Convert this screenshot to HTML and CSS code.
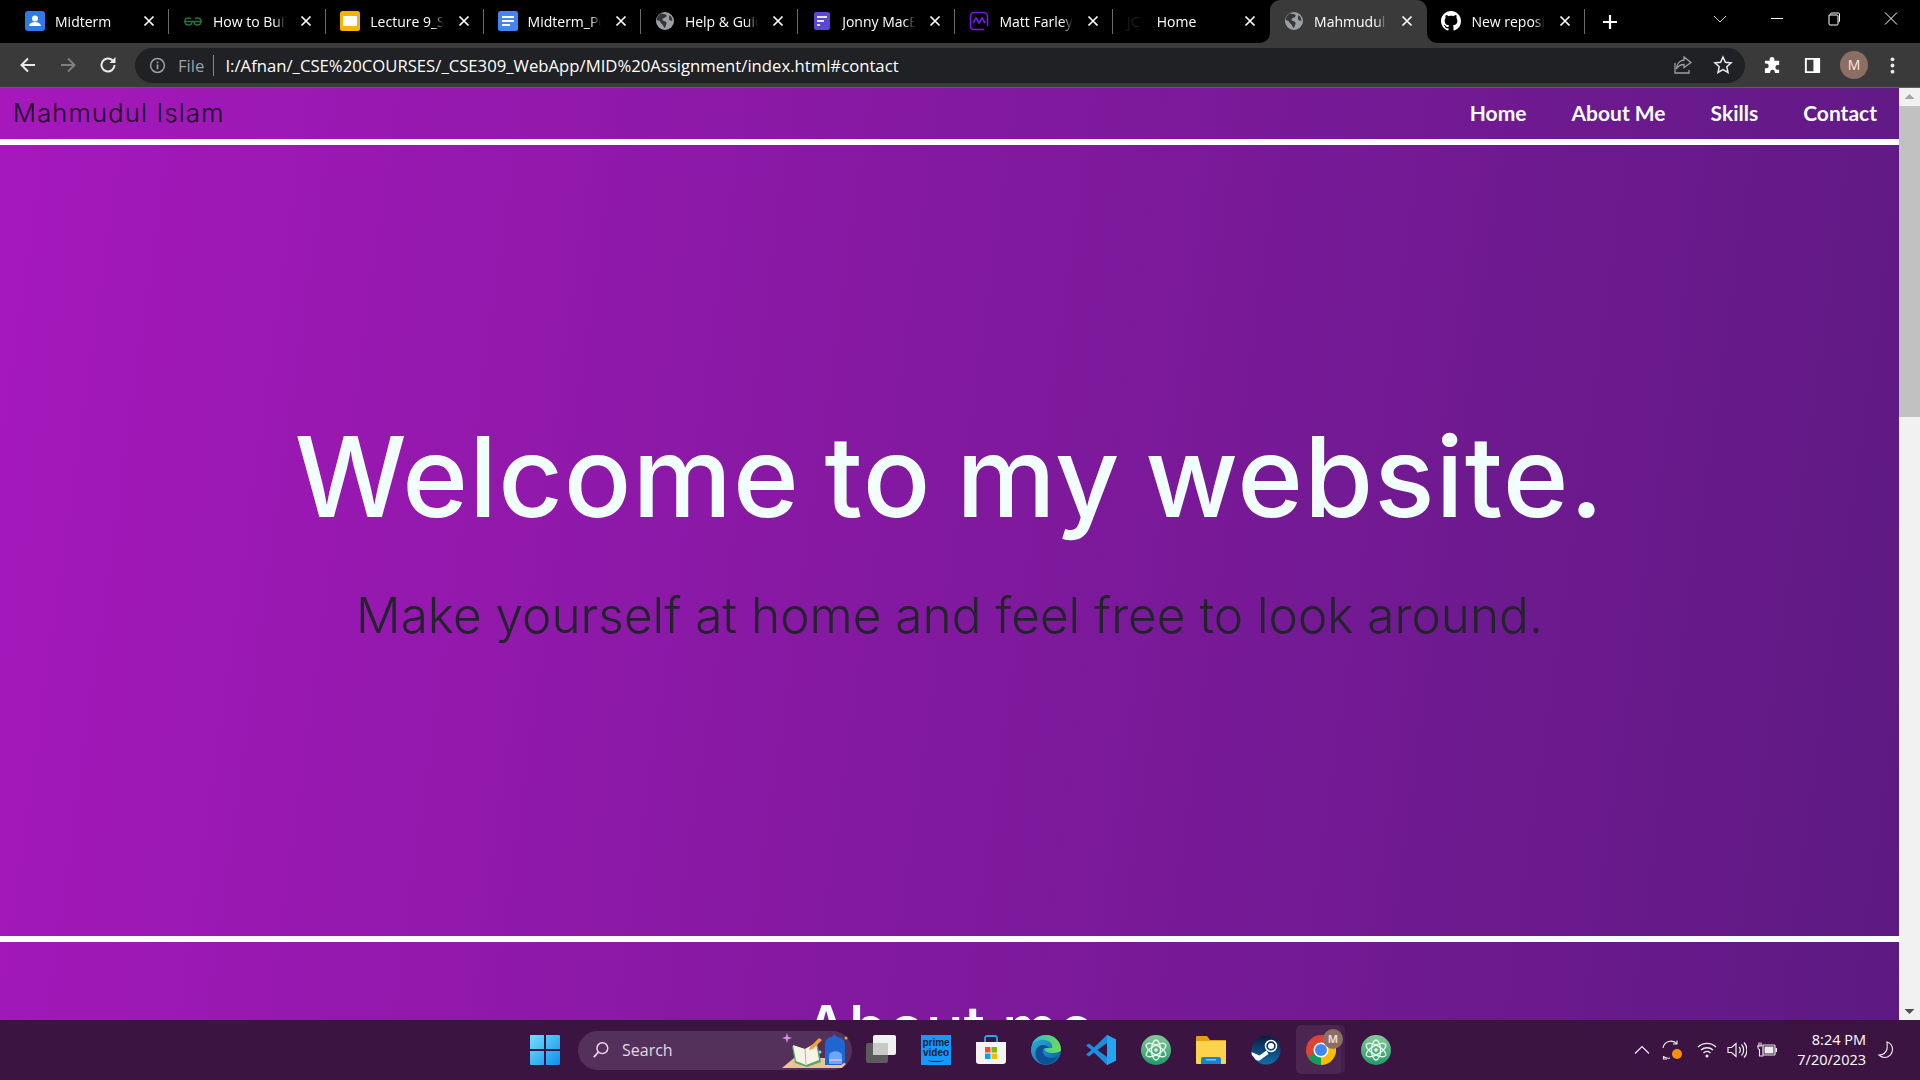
FILE: index.html
```html
<!DOCTYPE html>
<html lang="en">
<head>
  <meta charset="UTF-8" />
  <title>Mahmudul Islam</title>
  <link rel="stylesheet" href="styles.css">
</head>
<body>

  <svg class="sprite" xmlns="http://www.w3.org/2000/svg">
    <defs>
      <symbol id="i-close" viewBox="0 0 12 12"><path d="M1.5 1.5l9 9M10.5 1.5l-9 9" stroke="#fff" stroke-width="1.7" fill="none"/></symbol>
      <symbol id="i-globe" viewBox="0 0 20 20">
        <circle cx="10" cy="10" r="9" fill="#9aa0a6"/>
        <path d="M6 2.5c2 .5 4 .3 5.500 1.500 1 1-1 2.500-2.500 3-1.500.5-2 1.500-1 2.500s3 .5 3.500 2c.3 1.500-.8 3-1.500 5.500-1.500-.5-1.700-2.500-2.500-3.500-1-1-2-1.500-2.500-3-.5-1.500-3-1-3.300-1.800C2 6 4 3.500 6 2.500z" fill="#35363a"/>
        <path d="M14.500 4c1.500 1.200 2.800 3.300 3 5.500-1.500.5-3 0-3.500-1.500-.4-1.300.5-2.500.5-4z" fill="#35363a"/>
      </symbol>
      <symbol id="i-atom" viewBox="0 0 30 30">
        <circle cx="15" cy="15" r="15" fill="url(#atom-bg)"/>
        <g fill="none" stroke="#e8f6ec" stroke-width="1.300">
          <ellipse cx="15" cy="15" rx="11" ry="4.500" transform="rotate(30 15 15)"/>
          <ellipse cx="15" cy="15" rx="11" ry="4.500" transform="rotate(-30 15 15)"/>
          <ellipse cx="15" cy="15" rx="4.500" ry="10"/>
        </g>
        <circle cx="15" cy="15" r="1.800" fill="#e8f6ec"/>
      </symbol>
      <linearGradient id="atom-bg" x1="0" y1="0" x2="0" y2="1"><stop offset="0" stop-color="#86c99a"/><stop offset="1" stop-color="#1f9a66"/></linearGradient>
      <linearGradient id="win-bg" x1="0" y1="0" x2="1" y2="1"><stop offset="0" stop-color="#6fe2fb"/><stop offset="1" stop-color="#0f8fee"/></linearGradient>
      <linearGradient id="edge-bg" x1="0" y1="0" x2="1" y2="1"><stop offset="0" stop-color="#2bb5d8"/><stop offset="1" stop-color="#0c59a4"/></linearGradient>
      <linearGradient id="edge-top" x1="0" y1="0" x2="1" y2="0"><stop offset="0" stop-color="#2fb4e0"/><stop offset="1" stop-color="#6ee04e"/></linearGradient>
      <linearGradient id="steam-bg" x1="0" y1="0" x2="0" y2="1"><stop offset="0" stop-color="#0d1b3d"/><stop offset="1" stop-color="#0f6fa8"/></linearGradient>
    </defs>
  </svg>

  <div class="window">

    <div class="tabstrip">
      <div class="tab">
        <svg class="favicon" viewBox="0 0 20 20"><rect width="20" height="20" rx="3" fill="#2f7be6"/><circle cx="10" cy="7.500" r="3" fill="#fff"/><path d="M4 15c.5-3 3-4 6-4s5.500 1 6 4z" fill="#fff"/></svg>
        <span class="tab-title">Midterm</span>
        <svg class="tab-close"><use href="#i-close"/></svg>
      </div>
      <div class="tab">
        <svg class="favicon" viewBox="0 0 20 20"><path d="M1 10.500h18M9 10.500c0 2.500-1.500 3.500-3.500 3.500S2 12.500 2 10.500 3.500 7 5.500 7c1 0 2 .5 2.500 1M11 10.500c0 2.500 1.500 3.500 3.500 3.500s3.500-1.500 3.500-3.500S16.500 7 14.500 7c-1 0-2 .5-2.500 1" stroke="#26703a" stroke-width="1.400" fill="none"/></svg>
        <span class="tab-title">How to Build a Website</span>
        <svg class="tab-close"><use href="#i-close"/></svg>
      </div>
      <div class="tab">
        <svg class="favicon" viewBox="0 0 20 20"><rect width="20" height="20" rx="2.500" fill="#f4b400"/><rect x="3" y="5" width="14" height="10" fill="#fff"/></svg>
        <span class="tab-title">Lecture 9_Slides</span>
        <svg class="tab-close"><use href="#i-close"/></svg>
      </div>
      <div class="tab">
        <svg class="favicon" viewBox="0 0 20 20"><rect width="20" height="20" rx="2.500" fill="#4285f4"/><path d="M4 5h12v2H4zM4 9h12v2H4zM4 13h8v2H4z" fill="#fff"/></svg>
        <span class="tab-title">Midterm_Portfolio</span>
        <svg class="tab-close"><use href="#i-close"/></svg>
      </div>
      <div class="tab">
        <svg class="favicon"><use href="#i-globe"/></svg>
        <span class="tab-title">Help &amp; Guide</span>
        <svg class="tab-close"><use href="#i-close"/></svg>
      </div>
      <div class="tab">
        <svg class="favicon" viewBox="0 0 20 20"><rect x="2" y="1" width="16" height="18" rx="2" fill="#5b46d6"/><path d="M5 5h10v2H5zM5 9h7v2H5z" fill="#e7e3fb"/><rect x="5" y="13" width="3" height="2" fill="#e7e3fb"/></svg>
        <span class="tab-title">Jonny MacBeth</span>
        <svg class="tab-close"><use href="#i-close"/></svg>
      </div>
      <div class="tab">
        <svg class="favicon" viewBox="0 0 20 20"><path d="M15 18.500H5a3.500 3.500 0 0 1-3.500-3.500V5A3.500 3.500 0 0 1 5 1.500h10A3.500 3.500 0 0 1 18.500 5v10" fill="none" stroke="#7a16f0" stroke-width="1.600"/><path d="M4 12l3-5 3 5 3-5 3 5" fill="none" stroke="#7a16f0" stroke-width="1.600"/></svg>
        <span class="tab-title">Matt Farley</span>
        <svg class="tab-close"><use href="#i-close"/></svg>
      </div>
      <div class="tab before-active">
        <span class="favicon favicon-dark">jC</span>
        <span class="tab-title">Home</span>
        <svg class="tab-close"><use href="#i-close"/></svg>
      </div>
      <div class="tab tab-active">
        <svg class="favicon"><use href="#i-globe"/></svg>
        <span class="tab-title">Mahmudul Islam</span>
        <svg class="tab-close"><use href="#i-close"/></svg>
      </div>
      <div class="tab after-active">
        <svg class="favicon" viewBox="0 0 16 16"><path fill="#fff" d="M8 0C3.580 0 0 3.580 0 8c0 3.540 2.290 6.530 5.470 7.590.4.070.55-.17.55-.38 0-.19-.01-.82-.01-1.490-2.010.37-2.530-.49-2.690-.94-.09-.23-.48-.94-.82-1.130-.28-.15-.68-.52-.01-.53.63-.01 1.080.58 1.230.82.720 1.210 1.870.87 2.330.66.070-.52.280-.87.510-1.070-1.780-.2-3.640-.89-3.640-3.950 0-.87.310-1.590.820-2.150-.08-.2-.36-1.020.08-2.120 0 0 .67-.21 2.200.82.640-.18 1.320-.27 2-.27s1.360.09 2 .27c1.530-1.040 2.200-.82 2.200-.82.440 1.100.16 1.920.08 2.120.51.560.82 1.270.82 2.150 0 3.070-1.870 3.750-3.650 3.950.290.250.540.730.540 1.480 0 1.070-.01 1.930-.01 2.200 0 .210.150.460.550.380A8.010 8.010 0 0 0 16 8c0-4.420-3.580-8-8-8z"/></svg>
        <span class="tab-title">New repository</span>
        <svg class="tab-close"><use href="#i-close"/></svg>
      </div>
      <div class="strip-rest">
        <svg class="new-tab" viewBox="0 0 16 16"><path d="M8 1v14M1 8h14" stroke="#fff" stroke-width="2.200"/></svg>
        <div class="win-controls">
          <svg viewBox="0 0 14 14"><path d="M1 4l6 6 6-6" stroke="#c8c8c8" fill="none"/></svg>
          <svg viewBox="0 0 14 14"><path d="M1 6.500h12" stroke="#fff" fill="none"/></svg>
          <svg viewBox="0 0 14 14"><path d="M3.500 2.500V2a1 1 0 0 1 1-1h7a1 1 0 0 1 1 1v7a1 1 0 0 1-1 1M2 3h8a1 1 0 0 1 1 1v8a1 1 0 0 1-1 1H3a1 1 0 0 1-1-1z" stroke="#fff" fill="none"/></svg>
          <svg viewBox="0 0 14 14"><path d="M1 .5l12 12M13 .5l-12 12" stroke="#fff" fill="none"/></svg>
        </div>
      </div>
    </div>

    <div class="toolbar">
      <svg class="tool-icon" viewBox="0 0 20 20"><path d="M17 10H4M10 3.500L3.500 10l6.500 6.500" stroke="#e8eaed" stroke-width="2" fill="none"/></svg>
      <svg class="tool-icon" viewBox="0 0 20 20"><path d="M3 10h13M10 3.500l6.500 6.500-6.500 6.500" stroke="#7c7f82" stroke-width="2" fill="none"/></svg>
      <svg class="tool-icon" viewBox="0 0 20 20"><path d="M16.500 10a6.500 6.500 0 1 1-2-4.700" stroke="#e8eaed" stroke-width="2" fill="none"/><path d="M17.500 2v6h-6z" fill="#e8eaed"/></svg>
      <div class="omnibox">
        <svg class="info-icon" viewBox="0 0 16 16"><circle cx="8" cy="8" r="6.500" stroke="#9aa0a6" stroke-width="1.400" fill="none"/><path d="M7.200 7h1.600v4.500H7.200zM7.200 4.300h1.600v1.600H7.200z" fill="#9aa0a6"/></svg>
        <span class="url-scheme">File</span>
        <span class="url-sep"></span>
        <span class="url">I:/Afnan/_CSE%20COURSES/_CSE309_WebApp/MID%20Assignment/index.html#contact</span>
        <svg class="omni-icon" viewBox="0 0 20 20"><path d="M11 2l7 5.500-7 5v-3c-4 0-6 1.500-7.500 4.500 0-5 3-8.500 7.500-9zM2 8v10h14v-3" stroke="#9aa0a6" stroke-width="1.300" fill="none"/></svg>
        <svg class="omni-icon" viewBox="0 0 20 20"><path d="M10 2l2.400 5.300 5.700.6-4.300 3.800 1.200 5.700L10 14.500l-5 2.900 1.200-5.700L1.900 7.900l5.700-.6z" stroke="#e8eaed" stroke-width="1.500" fill="none"/></svg>
      </div>
      <svg class="ext-icon ext-puzzle" viewBox="0 0 20 20"><path d="M7 3.500a2.500 2.500 0 0 1 5 0V5h5v4.500h-1.500a2.500 2.500 0 0 0 0 5H17V18h-4.500v-1a2.500 2.500 0 0 0-5 0v1H2v-5h1.500a2.500 2.500 0 0 0 0-5H2V5h5z" fill="#fff"/></svg>
      <svg class="ext-icon" viewBox="0 0 20 20"><path d="M2 2h16v16H2z M4 4v12h7V4z" fill="#fff" fill-rule="evenodd"/></svg>
      <span class="avatar">M</span>
      <svg class="ext-icon ext-menu" viewBox="0 0 20 20"><circle cx="10" cy="3.500" r="2" fill="#e8eaed"/><circle cx="10" cy="10" r="2" fill="#e8eaed"/><circle cx="10" cy="16.500" r="2" fill="#e8eaed"/></svg>
    </div>

    <div class="viewport">
      <div class="page">
        <nav class="navbar">
          <a class="brand" href="#">Mahmudul Islam</a>
          <ul class="nav-links">
            <li><a href="#home">Home</a></li>
            <li><a href="#about">About Me</a></li>
            <li><a href="#skills">Skills</a></li>
            <li><a href="#contact">Contact</a></li>
          </ul>
        </nav>
        <section class="hero" id="home">
          <h1>Welcome to my website.</h1>
          <p>Make yourself at home and feel free to look around.</p>
        </section>
        <section class="about" id="about">
          <h2>About me</h2>
        </section>
      </div>
      <div class="scrollbar">
        <svg class="scroll-arrow" viewBox="0 0 20 18"><path d="M5 11l5-5 5 5z" fill="#a3a3a3"/></svg>
        <div class="scroll-track"><div class="scroll-thumb"></div></div>
        <svg class="scroll-arrow" viewBox="0 0 20 18"><path d="M5 7l5 5 5-5z" fill="#505050"/></svg>
      </div>
    </div>

    <footer class="taskbar">
      <div class="task-center">
        <svg class="task-icon" viewBox="0 0 30 30"><path d="M0 1a1 1 0 0 1 1-1h13v14H0zM16 0h13a1 1 0 0 1 1 1v13H16zM0 16h14v14H1a1 1 0 0 1-1-1zM16 16h14v13a1 1 0 0 1-1 1H16z" fill="url(#win-bg)"/></svg>
        <div class="search">
          <svg class="search-icon" viewBox="0 0 20 20"><circle cx="11.500" cy="8" r="6" stroke="#e6dbe8" stroke-width="1.600" fill="none"/><path d="M7 12.500L2 18" stroke="#e6dbe8" stroke-width="2"/></svg>
          <span>Search</span>
          <svg class="search-art" viewBox="0 0 66 38">
            <path d="M0 37L12 27h44l8 6-4 4z" fill="#e7c594"/>
            <path d="M10 15l13 3 12-7 4 20-14 5-12-4z" fill="#5aa469"/>
            <path d="M11 14l12 4 11-6 3 17-13 5-10-4z" fill="#f5f3e6"/>
            <path d="M23 18l1 15" stroke="#a8a28c" stroke-width=".8"/>
            <path d="M28 16l9-9 3 2-9 9-4 1z" fill="#f2a23c"/>
            <path d="M43 34V14c0-5 3-8 7-8l2-3 3 3c5 0 8 3 8 8v15c0 3-3 5-5 5z" fill="#1f66d1"/>
            <path d="M47 33V24a7 6 0 0 1 13 0v9z" fill="#6aa7f5"/>
            <path d="M47 29h13" stroke="#c4b5fd" stroke-width="2"/>
            <path d="M5 2l1.200 3.800L10 7 6.200 8.200 5 12 3.800 8.200 0 7l3.800-1.200z" fill="#d98bf0"/>
            <circle cx="38" cy="21" r="1.500" fill="#7fd8e8"/>
            <circle cx="64" cy="7" r="1.500" fill="#f2a23c"/>
          </svg>
        </div>
        <svg class="task-icon" viewBox="0 0 30 30"><rect y="8" width="22" height="20" rx="2" fill="#5b5b5b"/><rect x="7" width="23" height="20" rx="2" fill="#f1f1f1"/><rect x="7" y="8" width="15" height="12" fill="#c9c9c9"/></svg>
        <div class="task-icon prime"><span>prime</span><span>video</span></div>
        <svg class="task-icon" viewBox="0 0 30 30"><path d="M9 7V3a2 2 0 0 1 2-2h8a2 2 0 0 1 2 2v4" stroke="#2aa3e8" stroke-width="1.800" fill="none"/><path d="M0 7h30v19a3 3 0 0 1-3 3H3a3 3 0 0 1-3-3z" fill="#f4f4f4"/><rect x="9" y="12" width="5.500" height="5.500" fill="#f25022"/><rect x="15.500" y="12" width="5.500" height="5.500" fill="#7fba00"/><rect x="9" y="18.500" width="5.500" height="5.500" fill="#00a4ef"/><rect x="15.500" y="18.500" width="5.500" height="5.500" fill="#ffb900"/></svg>
        <div class="task-slot running">
          <svg class="task-icon" viewBox="0 0 30 30"><circle cx="15" cy="15" r="15" fill="url(#edge-bg)"/><path d="M30 15C30 6 23 0 15 0 8 0 3 4 1 9c3-3 8-5 13-4 5 .7 8 4 7 8h-8c0 3 4 5 8 5 4 0 9-1 9-3z" fill="url(#edge-top)"/><path d="M12 14c-1 5 3 9 8 9 3 0 5-1 7-2-3 6-9 9-15 8 -6-2-9-9-7-14 1-3 4-5 7-5 3 0 5 1 6 3-3 0-5 .5-6 1z" fill="#0f4f96"/></svg>
        </div>
        <div class="task-slot running">
          <svg class="task-icon" viewBox="0 0 30 30"><path d="M21 0l9 4.500v21L21 30 8 17.500 3 21.500 0 19.500 5.500 15 0 10.500 3 8.500l5 4z" fill="#1a8fe0"/><path d="M21 8v14l-9.500-7z" fill="#3a1444"/><path d="M21 0l9 4.500v21L21 30z" fill="#23a6f0"/></svg>
        </div>
        <svg class="task-icon"><use href="#i-atom"/></svg>
        <div class="task-slot running">
          <svg class="task-icon" viewBox="0 0 30 30"><path d="M0 2a1 1 0 0 1 1-1h10l3 4h16v8H0z" fill="#e3a008"/><path d="M0 6h30v22a1 1 0 0 1-1 1H1a1 1 0 0 1-1-1z" fill="#fcd34d"/><path d="M5 24a2 2 0 0 1 2-2h16a2 2 0 0 1 2 2v5H5z" fill="#1b7fd6"/><rect x="10" y="24" width="10" height="1.500" fill="#7cc1f5"/></svg>
        </div>
        <svg class="task-icon" viewBox="0 0 30 30"><circle cx="15" cy="15" r="14.500" fill="url(#steam-bg)"/><circle cx="20" cy="11" r="5.500" fill="none" stroke="#fff" stroke-width="1.500"/><circle cx="20" cy="11" r="3" fill="#fff"/><path d="M.5 17l8 3.500 7-5 2 3.500-7 5a4 4 0 0 1-7-1L.8 20z" fill="#fff"/></svg>
        <div class="task-slot active">
          <svg class="task-icon" viewBox="0 0 30 30"><circle cx="15" cy="15" r="15" fill="#db4437"/><path d="M15 15L2 22.500A15 15 0 0 0 15 30z" fill="#0f9d58"/><path d="M15 15l13-7.500A15 15 0 0 1 15 30z" fill="#fbbc04"/><circle cx="15" cy="15" r="7.500" fill="#fff"/><circle cx="15" cy="15" r="6" fill="#4285f4"/></svg>
          <span class="chrome-badge">M</span>
        </div>
        <div class="task-slot running">
          <svg class="task-icon"><use href="#i-atom"/></svg>
        </div>
      </div>
      <div class="tray">
        <svg class="tray-chevron" viewBox="0 0 16 10"><path d="M1 8.500l7-7 7 7" stroke="#eee" stroke-width="1.200" fill="none"/></svg>
        <svg class="tray-sync" viewBox="0 0 20 20"><path d="M1 8a8 8 0 0 1 14-4M15 .5V4h-4M5 19H1.500v-3" stroke="#eee" stroke-width="1.100" fill="none"/><path d="M1.500 16.500A8 8 0 0 0 8 18" stroke="#eee" stroke-width="1.100" fill="none"/><circle cx="15" cy="14" r="5" fill="#f79009"/></svg>
        <svg class="tray-icon tray-wifi" viewBox="0 0 20 20"><path d="M1 7a13 13 0 0 1 18 0M4 10a9 9 0 0 1 12 0M6.500 13a5 5 0 0 1 7 0" stroke="#eee" stroke-width="1.400" fill="none"/><circle cx="10" cy="16" r="1.500" fill="#eee"/></svg>
        <svg class="tray-icon" viewBox="0 0 20 20"><path d="M1 7.500h3.500L9 3.500v13l-4.500-4H1z" stroke="#eee" stroke-width="1.200" fill="none"/><path d="M12 7a4 4 0 0 1 0 6M14.500 4.500a8 8 0 0 1 0 11M17 2.500a11 11 0 0 1 0 15" stroke="#eee" stroke-width="1.200" fill="none"/></svg>
        <svg class="tray-icon" viewBox="0 0 20 20"><path d="M6 5h11a1 1 0 0 1 1 1v8a1 1 0 0 1-1 1H6z" stroke="#eee" stroke-width="1.200" fill="none"/><rect x="7.500" y="6.500" width="9" height="7" fill="#eee"/><rect x="18.500" y="8" width="1.500" height="4" fill="#eee"/><path d="M0 6h5M2 2.500V6M4 2.500V6M1 6v2a2 2 0 0 0 1.500 1.500V16h4" stroke="#eee" stroke-width="1.100" fill="none"/></svg>
        <div class="clock"><span>8:24 PM</span><span>7/20/2023</span></div>
        <svg class="tray-moon" viewBox="0 0 16 18"><path d="M9 1c3 1 5.500 4 5.500 7.500A8 8 0 0 1 6.500 16.500c-2 0-4-1-5.500-2.500 4 0 7-2.500 8-6 .5-2.500 0-5 0-7z" stroke="#eee" stroke-width="1.100" fill="none"/></svg>
      </div>
    </footer>

  </div>

</body>
</html>
```

FILE: styles.css
```css
/* Base */
* {
  box-sizing: border-box;
}
body {
  margin: 0;
  font-family: "Open Sans", "Noto Sans", sans-serif;
  background: #000;
  overflow: hidden;
}
a {
  text-decoration: none;
  color: inherit;
}
.sprite {
  display: block;
  width: 0;
  height: 0;
}
.window {
  width: 1920px;
  height: 1080px;
  display: flex;
  flex-direction: column;
  overflow: hidden;
}

/* Tab strip */
.tabstrip {
  height: 43px;
  flex: none;
  display: flex;
  background: linear-gradient(#000 50%, #3a3a3a 50%);
}
.tab {
  width: 157.3px;
  height: 43px;
  flex: none;
  display: flex;
  align-items: center;
  padding: 0 14px 1px 14px;
  background: #000 linear-gradient(#6a6a6a, #6a6a6a) no-repeat right 9px / 1px 25px;
  color: #fff;
  font-size: 14px;
}
.tab:first-child {
  width: 169px;
  padding-left: 25px;
}
.before-active {
  background: #000;
  border-bottom-right-radius: 10px;
}
.after-active {
  border-bottom-left-radius: 10px;
}
.tab-active {
  background: #3a3a3a;
  border-radius: 10px 10px 0 0;
}
.favicon {
  width: 20px;
  height: 20px;
  flex: none;
  margin-right: 10px;
}
.favicon-dark {
  color: #1c1c1c;
  font-size: 15px;
  line-height: 20px;
}
.tab-title {
  flex: 1;
  overflow: hidden;
  white-space: nowrap;
  -webkit-mask-image: linear-gradient(to right, #000 85%, transparent);
  mask-image: linear-gradient(to right, #000 85%, transparent);
}
.tab-close {
  width: 12px;
  height: 12px;
  flex: none;
  margin-left: 14px;
}
.strip-rest {
  flex: 1;
  display: flex;
  align-items: center;
  background: #000;
}
.new-tab {
  width: 16px;
  height: 16px;
  margin-left: 17px;
}
.win-controls {
  margin-left: auto;
  display: flex;
  gap: 43px;
  padding: 0 22px 6px 0;
}
.win-controls svg {
  width: 14px;
  height: 14px;
}

/* Toolbar */
.toolbar {
  height: 45px;
  flex: none;
  display: flex;
  align-items: center;
  padding: 0 18px;
  background: #3a3a3a;
  border-bottom: 1px solid #5f5f5f;
}
.tool-icon {
  width: 20px;
  height: 20px;
  flex: none;
  margin-right: 20px;
}
.omnibox {
  width: 1610px;
  height: 35px;
  margin: 0 0 0 -3px;
  flex: none;
  display: flex;
  align-items: center;
  padding: 0 12px 0 14px;
  background: #202124;
  border-radius: 18px;
  font-size: 16.7px;
}
.info-icon {
  width: 17px;
  height: 17px;
  flex: none;
}
.url-scheme {
  margin-left: 12px;
  color: #9aa0a6;
}
.url-sep {
  width: 1px;
  height: 21px;
  margin: 0 11px 0 9px;
  background: #80868b;
}
.url {
  flex: 1;
  color: #fff;
  white-space: nowrap;
}
.omni-icon {
  width: 20px;
  height: 20px;
  flex: none;
  margin-left: 20px;
}
.ext-icon {
  width: 19px;
  height: 19px;
  flex: none;
  margin-left: 21px;
}
.ext-puzzle {
  margin-left: 18px;
}
.ext-menu {
  margin-left: 15px;
}
.avatar {
  width: 28px;
  height: 28px;
  flex: none;
  margin-left: 18px;
  border-radius: 50%;
  background: #8d6e63;
  color: #f2ece9;
  font-size: 14px;
  line-height: 28px;
  text-align: center;
}

/* Page */
.viewport {
  flex: 1;
  min-height: 0;
  display: flex;
}
.page {
  flex: 1;
  min-width: 0;
  overflow: hidden;
  background: linear-gradient(98deg, #a618bc, #5d1a82);
}
.navbar {
  height: 57px;
  display: flex;
  align-items: center;
  justify-content: space-between;
  padding: 0 22px 2px 13px;
  border-bottom: 6px solid #fff;
}
.brand {
  font-family: "Inter", "Roboto", sans-serif;
  font-size: 25.5px;
  font-weight: 300;
  letter-spacing: 1.2px;
  color: #1a0624;
}
.nav-links {
  list-style: none;
  display: flex;
  gap: 45px;
  margin: 0;
  padding: 0;
  color: #f2ffff;
  font-family: "Lato", sans-serif;
  font-size: 21px;
  font-weight: 700;
}
.hero {
  height: 797px;
  display: flex;
  flex-direction: column;
  align-items: center;
  justify-content: center;
  padding-bottom: 28px;
  border-bottom: 6px solid #fff;
  font-family: "Inter", sans-serif;
}
.hero h1 {
  margin: 0;
  color: #f2ffff;
  font-size: 112px;
  font-weight: 500;
  letter-spacing: 1px;
  word-spacing: -6px;
  line-height: 134px;
  white-space: nowrap;
}
.hero p {
  margin: 42px 0 0;
  color: #212529;
  font-size: 49.5px;
  font-weight: 300;
  line-height: 60px;
}
.about {
  padding-top: 48px;
  text-align: center;
  font-family: "Inter", sans-serif;
}
.about h2 {
  margin: 0;
  color: #f2ffff;
  font-size: 63px;
  font-weight: 500;
  line-height: 76px;
}

/* Scrollbar */
.scrollbar {
  width: 21px;
  flex: none;
  display: flex;
  flex-direction: column;
  background: #f1f1f1;
}
.scroll-arrow {
  width: 21px;
  height: 18px;
  flex: none;
}
.scroll-track {
  flex: 1;
}
.scroll-thumb {
  height: 311px;
  background: #c1c1c1;
}

/* Taskbar */
.taskbar {
  height: 60px;
  flex: none;
  display: flex;
  align-items: center;
  padding-left: 530px;
  background: #3b1442;
  color: #fff;
}
.task-center {
  display: flex;
  align-items: center;
  gap: 25px;
}
.task-icon {
  width: 30px;
  height: 30px;
  flex: none;
  display: block;
}
.task-slot {
  width: 30px;
  height: 30px;
  flex: none;
  display: flex;
  flex-direction: column;
  align-items: center;
  position: relative;
}
.running::after {
  content: "";
  width: 7px;
  height: 3px;
  margin-top: 5px;
  border-radius: 2px;
  background: #b9a5bd;
}
.active::before {
  content: "";
  position: absolute;
  inset: -10px -5px -9px -10px;
  border-radius: 5px;
  background: rgba(255, 255, 255, 0.08);
  box-shadow: 4px 0 0 rgba(255, 255, 255, 0.05);
}
.active::after {
  content: "";
  width: 20px;
  height: 4px;
  margin-top: 5px;
  border-radius: 2px;
  background: #dc62e6;
  position: relative;
}
.active .task-icon {
  position: relative;
}
.chrome-badge {
  position: absolute;
  top: -6px;
  right: -7px;
  width: 20px;
  height: 20px;
  border-radius: 50%;
  background: #8d6e63;
  color: #e8dcd8;
  font-size: 11px;
  font-weight: 700;
  line-height: 20px;
  text-align: center;
}
.search {
  width: 274px;
  height: 39px;
  margin-left: -7px;
  margin-right: -11px;
  display: flex;
  align-items: center;
  padding-left: 14px;
  border-radius: 20px;
  background: #54315b;
  color: #e2d7e4;
  font-size: 16px;
}
.search-icon {
  width: 18px;
  height: 18px;
  margin-right: 12px;
}
.search-art {
  width: 68px;
  height: 38px;
  margin-left: auto;
  margin-right: 3px;
  flex: none;
}
.prime {
  display: flex;
  flex-direction: column;
  align-items: center;
  justify-content: center;
  background: #1399ff;
  color: #10222e;
  font-family: "Liberation Sans", sans-serif;
  font-size: 10px;
  font-weight: 700;
  line-height: 10px;
}
.prime::after {
  content: "";
  width: 16px;
  height: 3px;
  border-bottom: 1.5px solid #10222e;
  border-radius: 50%;
}
.tray {
  margin-left: auto;
  display: flex;
  align-items: center;
  padding-right: 26px;
}
.tray-chevron {
  width: 16px;
  height: 10px;
}
.tray-sync {
  width: 20px;
  height: 20px;
  margin-left: 12px;
}
.tray-icon {
  width: 20px;
  height: 20px;
  margin-left: 10px;
}
.tray-wifi {
  margin-left: 15px;
}
.clock {
  width: 89px;
  display: flex;
  flex-direction: column;
  align-items: flex-end;
  font-size: 14.5px;
  line-height: 20px;
}
.tray-moon {
  width: 16px;
  height: 18px;
  margin-left: 12px;
}
```
